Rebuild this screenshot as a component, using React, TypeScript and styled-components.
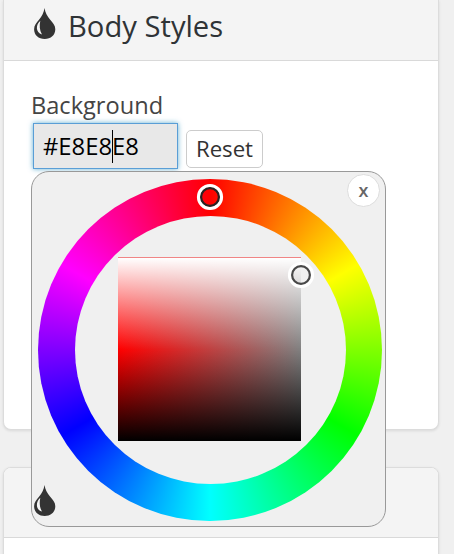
import React from "react";
import styled, { createGlobalStyle } from "styled-components";

const GlobalStyle = createGlobalStyle`
  * { box-sizing: border-box; }
  html, body { margin: 0; height: 100%; overflow: hidden; background: #f0f0f0; }
  body { font-family: "Open Sans", "Noto Sans", sans-serif; color: #333; }
`;

const Page = styled.main`
  display: flex;
  flex-direction: column;
  gap: 37px;
  height: 554px;
  padding: 0 15px 0 3px;
  overflow: hidden;
`;

const Card = styled.section<{ $height: number; $first?: boolean }>`
  flex: none;
  height: ${(p) => p.$height}px;
  background: #fff;
  border: 1px solid #dcdcdc;
  border-top-width: ${(p) => (p.$first ? 0 : 1)}px;
  border-radius: ${(p) => (p.$first ? "0 0 8px 8px" : "8px 8px 0 0")};
  box-shadow: 0 1px 3px rgba(0, 0, 0, 0.1);
`;

const CardHeader = styled.header<{ $height: number; $first?: boolean }>`
  display: flex;
  align-items: flex-start;
  height: ${(p) => p.$height}px;
  padding: 8px 28px 0 30px;
  gap: 12px;
  background: #f4f4f4;
  border-bottom: 1px solid #d9d9d9;
  border-radius: ${(p) => (p.$first ? "0" : "7px 7px 0 0")};
`;

const Title = styled.h2`
  margin: -2px 0 0;
  font-size: 29.2px;
  line-height: 40px;
  font-weight: 400;
  color: #2f3336;
`;

const CardBody = styled.div`
  padding: 27px 27px 0 28px;
`;

const Label = styled.div`
  height: 34px;
  margin-left: -1px;
  font-size: 23.6px;
  line-height: 34px;
  color: #444;
`;

const FieldRow = styled.div`
  display: flex;
  align-items: flex-start;
  gap: 8px;
  margin: 1px 0 0 1px;
`;

const ColorField = styled.div`
  display: flex;
  align-items: center;
  width: 145px;
  height: 46px;
  padding: 0 9px;
  border: 1px solid #5a9ed6;
  background: #e8e8e8;
  box-shadow: 0 0 5px rgba(30, 140, 190, 0.7);
  color: #000;
  font-size: 23.8px;
`;

const Caret = styled.i`
  width: 1px;
  height: 33px;
  margin: 0 -1px 0 0;
  background: #000;
`;

const ResetButton = styled.button`
  width: 77px;
  height: 38px;
  margin-top: 7px;
  padding: 0;
  border: 1px solid #ccc;
  border-radius: 5px;
  background: #fff;
  color: #333;
  font: 22.2px/34px "Open Sans", sans-serif;
`;

const Picker = styled.div`
  position: absolute;
  left: 31px;
  top: 171px;
  width: 355px;
  height: 356px;
  padding: 7px 0 0 6px;
  border: 1px solid #999;
  border-radius: 18px;
  background: #f0f0f0;
`;

const CloseButton = styled.button`
  position: absolute;
  right: 5px;
  top: 2px;
  width: 33px;
  height: 33px;
  padding: 0 0 2px;
  border: 1px solid #ddd;
  border-radius: 50%;
  background: #fff;
  color: #666;
  font: 600 18px/28px "Open Sans", sans-serif;
`;

const Wheel = styled.div`
  position: relative;
  display: grid;
  place-items: center;
  width: 344px;
  height: 342px;
  border-radius: 50%;
  background: conic-gradient(#f00, #ff0 60deg, #0f0 120deg, #0ff 180deg, #00f 240deg, #f0f 300deg, #f00);
`;

const Hole = styled.div`
  display: grid;
  place-items: center;
  width: 271px;
  height: 268px;
  border-radius: 50%;
  background: #f0f0f0;
`;

const Shades = styled.div`
  width: 183px;
  height: 184px;
  margin: 0 1px 2px 0;
  border-top: 1px solid #f08585;
  background:
    linear-gradient(#fff, rgba(255, 255, 255, 0) 50%, rgba(0, 0, 0, 0) 50%, #000) padding-box,
    linear-gradient(90deg, #f00, #808080) padding-box;
`;

const Marker = styled.svg<{ $x: number; $y: number }>`
  position: absolute;
  left: ${(p) => p.$x}px;
  top: ${(p) => p.$y}px;
  width: 28px;
  height: 28px;
`;

const PickerDrop = styled.span`
  position: absolute;
  left: 2px;
  bottom: 9px;
  display: flex;
`;

function DropIcon() {
  return (
    <svg width="22" height="32" viewBox="0 0 22 32" aria-hidden="true">
      <path d="M10.5 0C11.2 4.6 13.2 8 16.2 11.8C18.8 15 21.3 17.5 21.3 21.2C21.3 27 16.8 31 10.7 31C4.5 31 .1 27 .1 21.2C.1 17.5 2.4 15 5 11.8C8 8 9.8 4.6 10.5 0Z" fill="#333" />
      <path d="M6.3 12.8C1.6 16.8 1.4 24.6 8 26.6C5.5 22.2 5.3 17.4 6.3 12.8Z" fill="#f4f4f4" />
    </svg>
  );
}

function ColorMarker({ x, y, dark }: { x: number; y: number; dark: string }) {
  return (
    <Marker $x={x} $y={y} viewBox="0 0 28 28">
      <circle cx="14" cy="14" r="11.3" fill="none" stroke="#fff" strokeWidth="3.6" />
      <circle cx="14" cy="14" r="8.9" fill="none" stroke={dark} strokeWidth="2.2" />
    </Marker>
  );
}

export default function App() {
  return (
    <>
      <GlobalStyle />
      <Page>
        <Card $height={430} $first>
          <CardHeader $height={61} $first>
            <DropIcon />
            <Title>Body Styles</Title>
          </CardHeader>
          <CardBody>
            <Label>Background</Label>
            <FieldRow>
              <ColorField>
                <span>#E8E8</span>
                <Caret />
                <span>E8</span>
              </ColorField>
              <ResetButton>Reset</ResetButton>
            </FieldRow>
          </CardBody>
        </Card>
        <Card $height={100}>
          <CardHeader $height={70} />
        </Card>
      </Page>
      <Picker>
        <Wheel>
          <Hole>
            <Shades />
          </Hole>
          <ColorMarker x={158} y={4} dark="#292323" />
          <ColorMarker x={249} y={82} dark="#484848" />
        </Wheel>
        <CloseButton aria-label="Close">x</CloseButton>
        <PickerDrop>
          <DropIcon />
        </PickerDrop>
      </Picker>
    </>
  );
}
